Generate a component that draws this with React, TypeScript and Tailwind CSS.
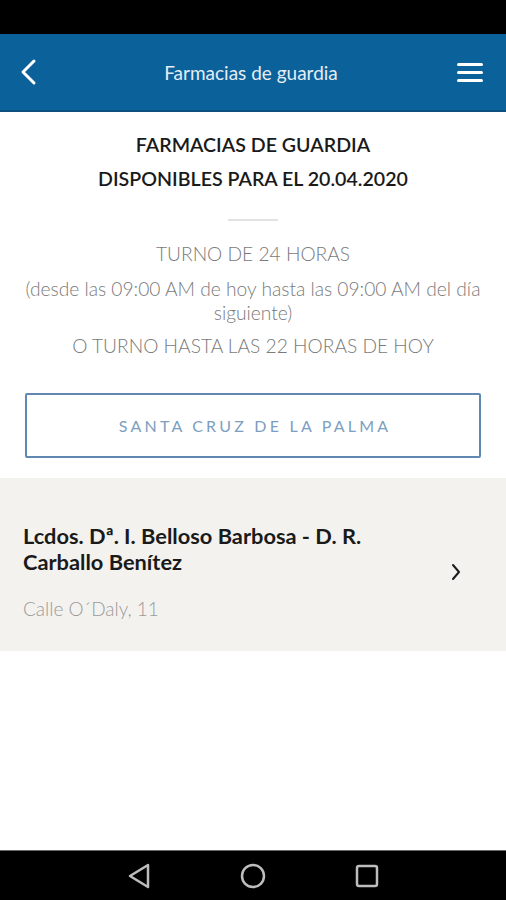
import React from 'react';

export default function App() {
  return (
    <div className="w-[506px] h-[900px] bg-white flex flex-col font-['Lato','Open_Sans',sans-serif] overflow-hidden">
      {/* status bar */}
      <div className="h-[34px] bg-black shrink-0" />

      {/* header */}
      <div className="h-[78px] shrink-0 bg-[#0b6199] border-b-2 border-[#0a4f7e] flex items-center pl-[19px] pr-[23px]">
        <svg width="20" height="28" viewBox="0 0 20 28" className="shrink-0">
          <path d="M15 3 L4 14 L15 25" fill="none" stroke="white" strokeWidth="3" strokeLinecap="round" strokeLinejoin="round" />
        </svg>
        <div className="flex-1 text-center text-[19px] text-[#e4edf5] pl-[6px] pt-[3px]">Farmacias de guardia</div>
        <div className="w-[26px] flex flex-col gap-[5px] shrink-0">
          <div className="h-[3px] bg-white rounded-sm" />
          <div className="h-[3px] bg-white rounded-sm" />
          <div className="h-[3px] bg-white rounded-sm" />
        </div>
      </div>

      {/* intro */}
      <div className="flex flex-col items-center text-center pt-[16px]">
        <div className="text-[19.6px] leading-[34px] font-semibold text-[#1a1a1a]">
          <div>FARMACIAS DE GUARDIA</div>
          <div>DISPONIBLES PARA EL 20.04.2020</div>
        </div>
        <div className="w-[50px] h-[2px] bg-[#e2e2e2] mt-[23px]" />
        <div className="mt-[21px] text-[19.2px] font-light text-[#7a7a7a] leading-[24px] px-[20px]">
          <div>TURNO DE 24 HORAS</div>
          <div className="mt-[11px]">(desde las 09:00 AM de hoy hasta las 09:00 AM del día siguiente)</div>
          <div className="mt-[9px]">O TURNO HASTA LAS 22 HORAS DE HOY</div>
        </div>
      </div>

      {/* city button */}
      <div className="px-[25px] mt-[35px]">
        <button className="w-full h-[65px] border-2 border-[#6088b0] rounded-[2px] bg-white text-[16px] tracking-[0.2em] text-[#7c9ec0] pl-[4px]">
          SANTA CRUZ DE LA PALMA
        </button>
      </div>

      {/* pharmacy item */}
      <div className="mt-[20px] bg-[#f3f2ef] h-[173px] flex items-center pl-[23px] pr-[44px]">
        <div className="flex-1 pt-[18px]">
          <div className="text-[21.8px] font-bold text-[#1a1a1a] leading-[26px] pr-[20px]">
            Lcdos. Dª. I. Belloso Barbosa - D. R. Carballo Benítez
          </div>
          <div className="mt-[20px] text-[19px] font-light text-[#9a9a9a]">Calle O´Daly, 11</div>
        </div>
        <svg width="12" height="18" viewBox="0 0 12 18" className="shrink-0 mt-[15px]">
          <path d="M3 2 L9 9 L3 16" fill="none" stroke="#1a1a1a" strokeWidth="2" strokeLinecap="round" strokeLinejoin="round" />
        </svg>
      </div>

      <div className="flex-1" />

      {/* android nav bar */}
      <div className="h-[50px] shrink-0 bg-black border-t border-[#6a6a6a] flex items-center justify-center gap-[88px]">
        <svg width="26" height="28" viewBox="0 0 26 28">
          <path d="M22 3 L4 14 L22 25 Z" fill="none" stroke="#bdbdbd" strokeWidth="2.5" strokeLinejoin="round" />
        </svg>
        <svg width="26" height="26" viewBox="0 0 26 26">
          <circle cx="13" cy="13" r="11" fill="none" stroke="#bdbdbd" strokeWidth="2.5" />
        </svg>
        <svg width="26" height="26" viewBox="0 0 26 26">
          <rect x="3" y="3" width="20" height="20" rx="2" fill="none" stroke="#bdbdbd" strokeWidth="2.5" />
        </svg>
      </div>
    </div>
  );
}
